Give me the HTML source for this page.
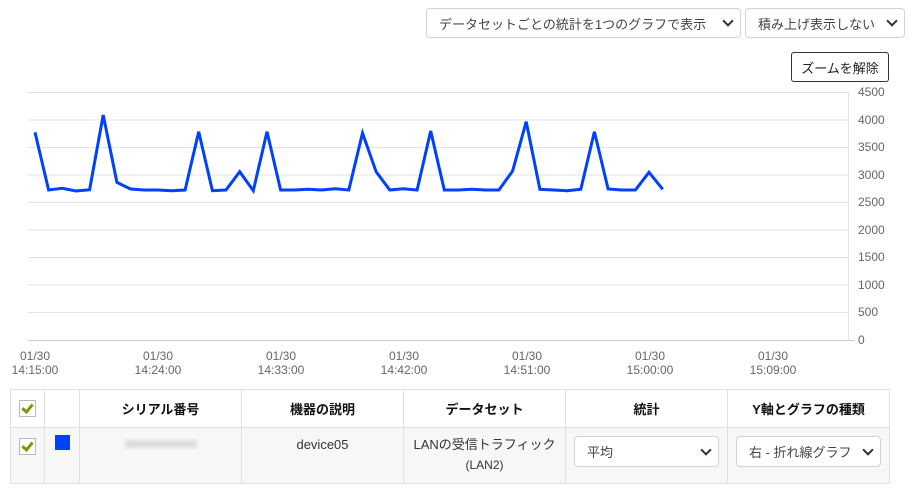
<!DOCTYPE html>
<html><head><meta charset="utf-8"><style>
body{margin:0;width:910px;height:491px;background:#fff;font-family:"Liberation Sans","Noto Sans CJK JP",sans-serif;position:relative;overflow:hidden;color:#212529}
.sel{position:absolute;border:1px solid #ced4da;border-radius:4px;background:#fff;font-size:13px;color:#444;box-sizing:border-box;padding-left:12px;display:flex;align-items:center}
.sel .ar{position:absolute;right:8px;top:50%;width:6px;height:6px;border-right:2px solid #333;border-bottom:2px solid #333;transform:rotate(45deg);margin-top:-6px}
.btn{position:absolute;left:791px;top:52px;width:98px;height:30px;border:1px solid #333;border-radius:3px;box-sizing:border-box;font-size:13px;display:flex;align-items:center;justify-content:center;color:#222}
table{position:absolute;left:10px;top:389px;border-collapse:collapse;font-size:13px;table-layout:fixed}
td,th{border:1px solid #dee2e6;text-align:center;padding:0;overflow:hidden}
th{height:37px;font-weight:bold;color:#111}
.r td{height:55px;background:#f7f7f7;vertical-align:top}
.cell{height:55px;position:relative;overflow:hidden}
.cb{width:15px;height:15px;border:1px solid #bbb;background:#fff;margin:0 auto;position:relative}
.cb:after{content:"";position:absolute;left:4px;top:1px;width:4px;height:8px;border-right:3px solid #7a9a01;border-bottom:3px solid #7a9a01;transform:rotate(40deg)}
</style></head><body>
<div class="sel" style="left:426px;top:8px;width:315px;height:30px">データセットごとの統計を1つのグラフで表示<span class="ar"></span></div>
<div class="sel" style="left:745px;top:8px;width:160px;height:30px">積み上げ表示しない<span class="ar"></span></div>
<div class="btn">ズームを解除</div>
<svg width="910" height="385" style="position:absolute;left:0;top:0" font-family="Liberation Sans, sans-serif" font-size="12" fill="#666">
<g stroke="#e3e3e3" stroke-width="1">
<line x1="28" x2="848" y1="92.5" y2="92.5"/><line x1="28" x2="848" y1="120" y2="120"/><line x1="28" x2="848" y1="147.5" y2="147.5"/><line x1="28" x2="848" y1="175" y2="175"/><line x1="28" x2="848" y1="202.5" y2="202.5"/><line x1="28" x2="848" y1="230" y2="230"/><line x1="28" x2="848" y1="257.5" y2="257.5"/><line x1="28" x2="848" y1="285" y2="285"/><line x1="28" x2="848" y1="312.5" y2="312.5"/>
<line x1="848.5" x2="848.5" y1="92" y2="341"/>
</g>
<line x1="28" x2="854" y1="340.5" y2="340.5" stroke="#ccc"/>
<g text-anchor="start"><text x="858" y="96">4500</text><text x="858" y="124">4000</text><text x="858" y="151">3500</text><text x="858" y="179">3000</text><text x="858" y="206">2500</text><text x="858" y="234">2000</text><text x="858" y="261">1500</text><text x="858" y="289">1000</text><text x="858" y="316">500</text><text x="858" y="344">0</text></g>
<g text-anchor="middle"><text x="35" y="360">01/30</text><text x="35" y="374">14:15:00</text><text x="158" y="360">01/30</text><text x="158" y="374">14:24:00</text><text x="281" y="360">01/30</text><text x="281" y="374">14:33:00</text><text x="404" y="360">01/30</text><text x="404" y="374">14:42:00</text><text x="527" y="360">01/30</text><text x="527" y="374">14:51:00</text><text x="650" y="360">01/30</text><text x="650" y="374">15:00:00</text><text x="773" y="360">01/30</text><text x="773" y="374">15:09:00</text></g>
<polyline fill="none" stroke="#0040ff" stroke-width="3" stroke-linejoin="miter" points="35,132.3 48.6,190 62.3,188.3 75.9,191 89.6,189.7 103.2,115 116.9,182.3 130.5,189 144.2,190 157.8,190 171.5,190.7 185.1,190 198.7,131.7 212.4,190.7 226,190 239.7,171.7 253.3,190.7 267,131.7 280.6,190 294.3,190 307.9,189.3 321.5,190 335.2,188.7 348.8,190 362.5,133 376.1,171.7 389.8,190 403.4,188.7 417.1,190 430.7,131 444.3,190 458,190 471.6,189.3 485.3,190 498.9,190 512.6,171 526.2,121.7 539.9,189.3 553.5,190 567.2,190.7 580.8,189.3 594.4,131.7 608.1,189 621.7,190 635.4,190 649,172.3 662.7,189.3"/>
</svg>
<table>
<tr><th style="width:33px"><div class="cb"></div></th><th style="width:34px"></th><th style="width:161px">シリアル番号</th><th style="width:161px">機器の説明</th><th style="width:161px">データセット</th><th style="width:161px">統計</th><th style="width:161px">Y軸とグラフの種類</th></tr>
<tr class="r">
<td><div class="cell"><div class="cb" style="margin-top:10px"></div></div></td>
<td><div class="cell"><div style="width:15px;height:15px;background:#0040ff;position:absolute;left:10px;top:7px"></div></div></td>
<td><div class="cell"><div style="width:72px;height:8px;background:#ddd;margin:12px auto 0;filter:blur(1.5px)"></div></div></td>
<td><div class="cell" style="color:#333;line-height:16px;padding-top:9px;box-sizing:border-box">device05</div></td>
<td><div class="cell" style="color:#333;line-height:20px;padding-top:7px;box-sizing:border-box">LANの受信トラフィック<br><span style="font-size:12px">(LAN2)</span></div></td>
<td><div class="cell"><div class="sel" style="left:8px;top:8px;width:145px;height:31px">平均<span class="ar"></span></div></div></td>
<td><div class="cell"><div class="sel" style="left:8px;top:8px;width:145px;height:31px">右 - 折れ線グラフ<span class="ar"></span></div></div></td>
</tr>
</table>
</body></html>
